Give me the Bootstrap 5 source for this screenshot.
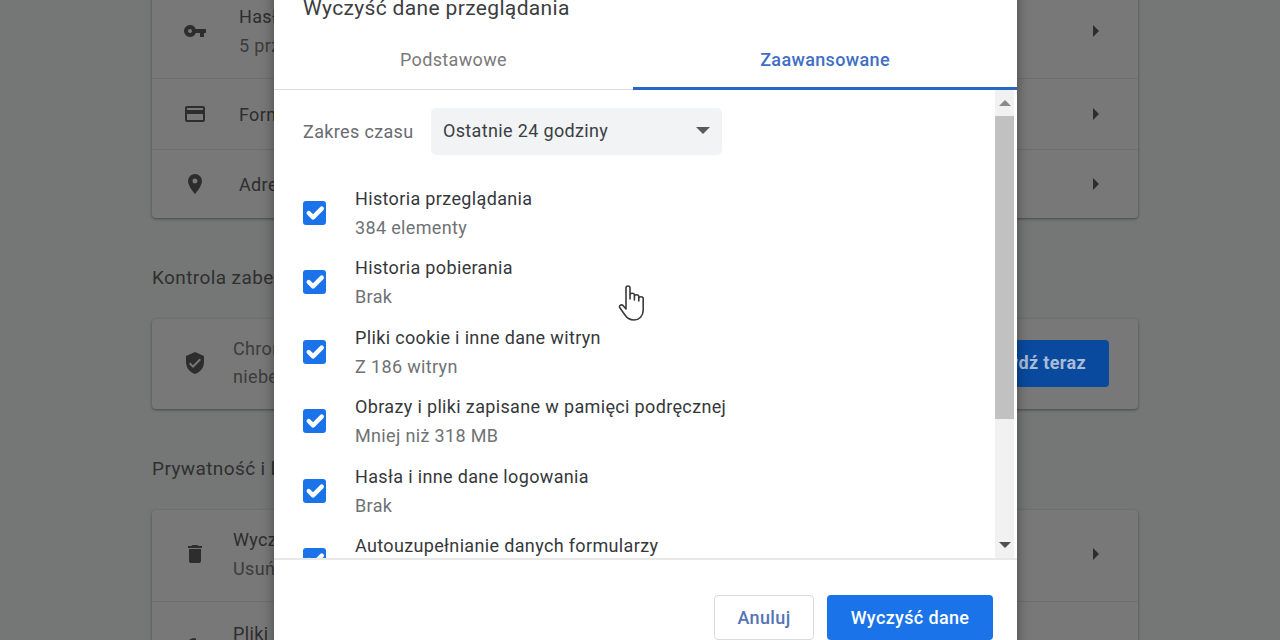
<!DOCTYPE html>
<html lang="pl">
<head>
<meta charset="utf-8">
<title>Wyczyść dane przeglądania</title>
<link href="https://cdn.jsdelivr.net/npm/bootstrap@5.3.0/dist/css/bootstrap.min.css" rel="stylesheet">
<style>
html,body{height:640px;overflow:hidden;background:#757776;font-family:Roboto,"Liberation Sans",sans-serif;}
.page-col{width:986px;margin-left:152px;margin-top:-16px;color:#2f2f2f;}
.set-card{background:#787878;border:0;border-radius:4px;box-shadow:0 1px 3px rgba(0,0,0,.4);overflow:hidden;}
.set-row{display:flex;align-items:center;background:transparent;border:0;color:#2d2d2d;font-size:18px;letter-spacing:.35px;line-height:29px;padding:0 37px 0 31px;}
.set-row+.set-row{border-top:1px solid #6e6e6e;}
.row-a{height:94px;}
.row-b{height:71px;}
.row-c{height:69px;}
.row-d{height:90px;padding-bottom:2px;line-height:28px;}
.row-e{height:91px;padding-bottom:3px;}
.row-f{height:93px;}
.set-ico{width:24px;height:24px;flex:none;fill:#2d2d2d;margin-right:32px;}
.set-ico-b{margin-right:26px;}
.set-sub{color:#3c3c3c;}
.set-tail{margin-left:auto;width:10px;height:14px;flex:none;margin-right:0;fill:#2d2d2d;}
.set-title{font-size:19px;letter-spacing:.4px;color:#2f2f2f;line-height:24px;margin:48px 0 29px;}
.dark-btn{display:flex;align-items:center;justify-content:flex-end;background:#094a9e;color:#a9bcd6;font-weight:700;font-size:18px;letter-spacing:.35px;border-radius:4px;height:47px;width:220px;margin-left:auto;margin-right:-8px;padding:0 23px 0 0;flex:none;}
.dlg{position:absolute;left:274px;top:-20px;width:743px;height:680px;background:#fff;display:flex;flex-direction:column;box-shadow:0 0 12px rgba(0,0,0,.4);}
.dlg-title{font-size:21px;letter-spacing:.35px;line-height:28px;color:#3b3d40;padding:14px 29px 0;margin:0;font-weight:400;}
.dlg-tabs{display:flex;height:52px;margin-top:16px;border-bottom:1px solid #dcdcdc;}
.dlg-tab{font-size:18px;letter-spacing:.35px;line-height:44px;text-align:center;color:#7a7a7a;width:359px;}
.dlg-tab-on{flex:1;color:#3f6fc4;font-weight:500;border-bottom:3px solid #2a66c4;height:52px;}
.dlg-mid{height:470px;display:flex;overflow:hidden;border-bottom:2px solid #e8e8e8;}
.dlg-scroll{flex:1;overflow:hidden;padding:18px 0 0 29px;}
.time-row{display:flex;align-items:center;height:47px;margin-bottom:23px;}
.time-lab{font-size:18px;letter-spacing:.35px;color:#696c70;width:128px;margin-top:-1px;}
.time-sel{width:291px;height:47px;background:#f1f3f4;border-radius:5px;padding:0 12px 2px;display:flex;align-items:center;justify-content:space-between;font-size:18px;letter-spacing:.35px;color:#3c4043;}
.sel-tri{width:0;height:0;border-left:7px solid transparent;border-right:7px solid transparent;border-top:7px solid #5a5a5a;margin-right:0;}
.chk-row{display:flex;align-items:center;height:69.5px;}
.form-check-input.chk-box{width:23px;height:24px;margin:0 29px 0 0;background-color:#1a73e8;border:0;border-radius:3px;flex:none;opacity:1;background-size:29px;background-position:center;}
.chk-main{font-size:18px;letter-spacing:.35px;line-height:29px;color:#35383b;}
.chk-sub{font-size:18px;letter-spacing:.35px;line-height:29px;color:#6f7275;}
.sbar{margin-right:0;background:#f1f1f1;display:flex;flex-direction:column;align-items:center;border-right:3px solid #fff;width:22px;flex:none;}
.sbar-up,.sbar-down{height:26px;display:flex;align-items:center;justify-content:center;flex:none;}
.sbar-thumb{width:19px;height:303px;background:#c1c1c1;flex:none;}
.sbar-gap{flex:1;}
.tri-u{width:0;height:0;border-left:6px solid transparent;border-right:6px solid transparent;border-bottom:6px solid #8a8a8a;}
.tri-d{width:0;height:0;border-left:6px solid transparent;border-right:6px solid transparent;border-top:6px solid #505050;}
.dlg-foot{flex:1;display:flex;justify-content:flex-end;gap:13px;padding:35px 24px 0 0;}
.btn.btn-no{width:100px;height:45px;background:#fff;border:1px solid #dadce0;color:#5574b5;font-weight:500;font-size:18px;letter-spacing:.35px;padding:0;border-radius:4px;}
.btn.btn-yes{width:166px;height:45px;background:#1a73e8;border:0;color:#fff;font-weight:500;font-size:18px;letter-spacing:.35px;padding:0;border-radius:4px;}
.hand{position:absolute;left:618px;top:284px;width:28px;height:38px;}
</style>
</head>
<body>
<div class="page-col">
  <div class="card set-card">
    <div class="list-group list-group-flush">
      <div class="list-group-item set-row row-a">
        <svg class="set-ico" viewBox="0 0 24 24"><path d="M12.65 10A6 6 0 0 0 7 6a6 6 0 0 0 0 12 6 6 0 0 0 5.65-4H17v4h4v-4h2v-4H12.65zM7 14a2 2 0 1 1 0-4 2 2 0 0 1 0 4z"/></svg>
        <div><div>Hasła</div><div class="set-sub">5 przechowywanych</div></div>
        <svg class="set-tail" viewBox="0 0 10 14"><path d="M2 1l6 6-6 6z"/></svg>
      </div>
      <div class="list-group-item set-row row-b">
        <svg class="set-ico" viewBox="0 0 24 24"><path d="M20 4H4a2 2 0 0 0-2 2v12a2 2 0 0 0 2 2h16a2 2 0 0 0 2-2V6a2 2 0 0 0-2-2zm0 14H4v-6h16v6zm0-10H4V6h16v2z"/></svg>
        <div>Formy płatności</div>
        <svg class="set-tail" viewBox="0 0 10 14"><path d="M2 1l6 6-6 6z"/></svg>
      </div>
      <div class="list-group-item set-row row-c">
        <svg class="set-ico" viewBox="0 0 24 24"><path d="M12 2a7 7 0 0 0-7 7c0 5.25 7 13 7 13s7-7.75 7-13a7 7 0 0 0-7-7zm0 9.5a2.5 2.5 0 1 1 0-5 2.5 2.5 0 0 1 0 5z"/></svg>
        <div>Adresy i inne</div>
        <svg class="set-tail" viewBox="0 0 10 14"><path d="M2 1l6 6-6 6z"/></svg>
      </div>
    </div>
  </div>
  <div class="set-title">Kontrola zabezpieczeń</div>
  <div class="card set-card">
    <div class="set-row row-d">
      <svg class="set-ico set-ico-b" viewBox="0 0 24 24"><path d="M12 1L3 5v6c0 5.55 3.84 10.74 9 12 5.16-1.26 9-6.45 9-12V5l-9-4zm-2 16l-4-4 1.41-1.41L10 14.17l6.59-6.59L18 9l-8 8z"/></svg>
      <div><div class="set-sub">Chrome może chronić Cię przed</div><div class="set-sub">niebezpiecznymi stronami</div></div>
      <div class="dark-btn">Sprawdź teraz</div>
    </div>
  </div>
  <div class="set-title">Prywatność i bezpieczeństwo</div>
  <div class="card set-card">
    <div class="list-group list-group-flush">
      <div class="list-group-item set-row row-e">
        <svg class="set-ico set-ico-b" viewBox="0 0 24 24"><path d="M6 19a2 2 0 0 0 2 2h8a2 2 0 0 0 2-2V7H6v12zM19 4h-3.5l-1-1h-5l-1 1H5v2h14V4z"/></svg>
        <div><div>Wyczyść dane</div><div class="set-sub">Usuń historię</div></div>
        <svg class="set-tail" viewBox="0 0 10 14"><path d="M2 1l6 6-6 6z"/></svg>
      </div>
      <div class="list-group-item set-row row-f">
        <svg class="set-ico set-ico-b" viewBox="0 0 24 24"><path d="M12 2c1 0 1 1 1 2a3 3 0 0 0 3 3 3 3 0 0 0 3 3c1 0 3 0 3 2a10 10 0 1 1-10-10z"/></svg>
        <div><div>Pliki cookie</div><div class="set-sub">Zezwalaj</div></div>
      </div>
    </div>
  </div>
</div>

<div class="dlg">
  <h5 class="dlg-title">Wyczyść dane przeglądania</h5>
  <div class="dlg-tabs">
    <div class="dlg-tab">Podstawowe</div>
    <div class="dlg-tab dlg-tab-on">Zaawansowane</div>
  </div>
  <div class="dlg-mid">
    <div class="dlg-scroll">
      <div class="time-row">
        <div class="time-lab">Zakres czasu</div>
        <div class="time-sel"><span>Ostatnie 24 godziny</span><span class="sel-tri"></span></div>
      </div>
      <div class="chk-row"><input class="form-check-input chk-box" type="checkbox" checked aria-label="Historia przeglądania"><div><div class="chk-main">Historia przeglądania</div><div class="chk-sub">384 elementy</div></div></div>
      <div class="chk-row"><input class="form-check-input chk-box" type="checkbox" checked aria-label="Historia pobierania"><div><div class="chk-main">Historia pobierania</div><div class="chk-sub">Brak</div></div></div>
      <div class="chk-row"><input class="form-check-input chk-box" type="checkbox" checked aria-label="Pliki cookie"><div><div class="chk-main">Pliki cookie i inne dane witryn</div><div class="chk-sub">Z 186 witryn</div></div></div>
      <div class="chk-row"><input class="form-check-input chk-box" type="checkbox" checked aria-label="Obrazy i pliki"><div><div class="chk-main">Obrazy i pliki zapisane w pamięci podręcznej</div><div class="chk-sub">Mniej niż 318 MB</div></div></div>
      <div class="chk-row"><input class="form-check-input chk-box" type="checkbox" checked aria-label="Hasła"><div><div class="chk-main">Hasła i inne dane logowania</div><div class="chk-sub">Brak</div></div></div>
      <div class="chk-row"><input class="form-check-input chk-box" type="checkbox" checked aria-label="Autouzupełnianie"><div><div class="chk-main">Autouzupełnianie danych formularzy</div><div class="chk-sub">Brak</div></div></div>
    </div>
    <div class="sbar">
      <div class="sbar-up"><span class="tri-u"></span></div>
      <div class="sbar-thumb"></div>
      <div class="sbar-gap"></div>
      <div class="sbar-down"><span class="tri-d"></span></div>
    </div>
  </div>
  <div class="dlg-foot">
    <button type="button" class="btn btn-no">Anuluj</button>
    <button type="button" class="btn btn-yes">Wyczyść dane</button>
  </div>
</div>

<svg class="hand" viewBox="0 0 28 38" aria-hidden="true"><path d="M8 4c0-2.6 4-2.6 4 0V15V11c0-2.4 4.4-2.4 4.4 0V16V12.5c0-2.4 4.4-2.4 4.4 0V17V14.5c0-2.4 4.4-2.4 4.4 0V26c0 6-4 10-9.2 10-5 0-7-2-9-5L2 24c-1.5-2 1-4 3-2.5L8 25z" fill="#fff" stroke="#3a3a3a" stroke-width="1.6" stroke-linejoin="round"/></svg>
<script src="https://cdn.jsdelivr.net/npm/bootstrap@5.3.0/dist/js/bootstrap.bundle.min.js"></script>
</body>
</html>
